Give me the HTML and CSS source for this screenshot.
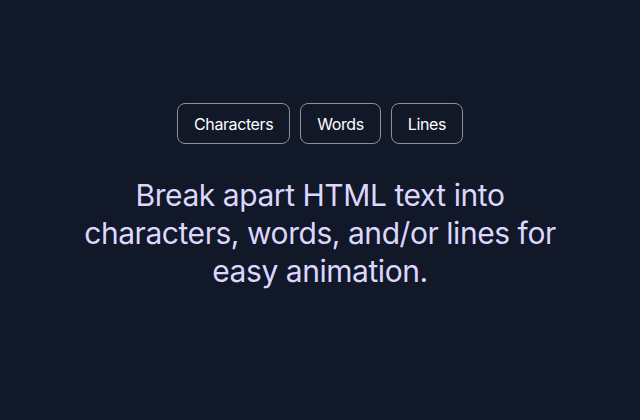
FILE: index.html
```html
<!DOCTYPE html>
<html>
<head>
<meta charset="utf-8">
<link rel="stylesheet" href="styles.css">
</head>
<body>
<main class="page">
  <div class="controls">
    <button class="btn">Characters</button>
    <button class="btn">Words</button>
    <button class="btn">Lines</button>
  </div>
  <h1 class="headline">Break apart HTML text into characters, words, and/or lines for easy animation.</h1>
</main>
</body>
</html>
```
FILE: styles.css
```css
html, body {
  margin: 0;
  padding: 0;
  background: #111827;
  height: 100%;
}
.page {
  display: flex;
  flex-direction: column;
  align-items: center;
  padding-top: 103px;
  font-family: Inter, "Noto Sans", sans-serif;
}
.controls {
  display: flex;
  gap: 10px;
}
.btn {
  height: 41px;
  padding: 0 16px;
  background: transparent;
  color: #ffffff;
  border: 1px solid #8b909a;
  border-radius: 8px;
  font-family: Inter, sans-serif;
  font-size: 16px;
  letter-spacing: -0.025em;
  cursor: pointer;
}
.headline {
  margin: 32px 0 0;
  max-width: 480px;
  text-align: center;
  font-size: 30px;
  line-height: 38px;
  font-weight: 400;
  letter-spacing: -0.015em;
  color: #ddd6fe;
}
```
